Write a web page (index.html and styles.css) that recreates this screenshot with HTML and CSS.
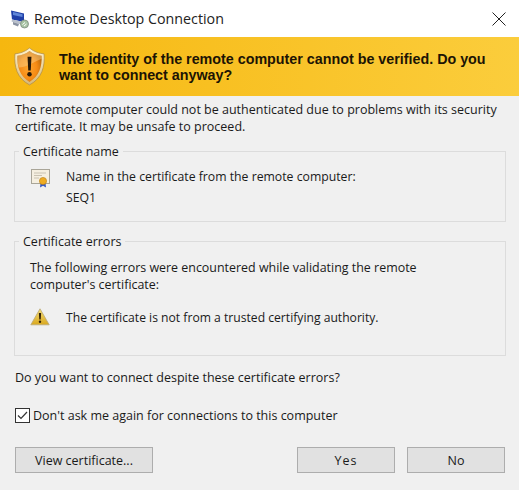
FILE: index.html
```html
<!DOCTYPE html>
<html lang="en">
<head>
<meta charset="utf-8">
<title>Remote Desktop Connection</title>
<link rel="stylesheet" href="styles.css">
</head>
<body>
<div class="dialog">
  <header class="titlebar">
    <svg class="app-icon" viewBox="0 0 20 20">
      <path d="M1 1.5 14 4.5 14 13 2 10.500Z" fill="#1f3fa8"/>
      <path d="M3 3 12.500 5.200 12.500 8 3 6Z" fill="#5f86d8"/>
      <path d="M2 10.500 14 13 15 15 9 15 1.500 12.500Z" fill="#b9c0cc"/>
      <path d="M3 13 9 15 8 17.500 3 15.500Z" fill="#8a93a3"/>
      <circle cx="14.500" cy="15" r="4" fill="#a8c4a4" stroke="#7d8a80" stroke-width=".8"/>
      <path d="M12.500 15.500 15 13.500M14 17 16.500 15" stroke="#fff" stroke-width="1" fill="none"/>
    </svg>
    <span class="title">Remote Desktop Connection</span>
    <svg class="close" viewBox="0 0 14 14"><path d="M.5.5 13.500 13.500M13.500.5.5 13.500" stroke="#222" stroke-width="1" fill="none"/></svg>
  </header>
  <section class="banner">
    <svg class="shield" viewBox="0 0 34 40">
      <defs>
        <radialGradient id="sg" cx=".45" cy=".55" r=".6">
          <stop offset="0" stop-color="#ffa52e"/><stop offset=".6" stop-color="#f58a14"/><stop offset="1" stop-color="#b8680c"/>
        </radialGradient>
        <linearGradient id="se" x1="0" y1="0" x2="0" y2="1">
          <stop offset="0" stop-color="#fff4d0"/><stop offset="1" stop-color="#d8b873"/>
        </linearGradient>
      </defs>
      <path d="M17 1C12 5 7 6.500 2 7 1 20 4 32 17 39 30 32 33 20 32 7 27 6.500 22 5 17 1Z" fill="url(#se)" stroke="#a8874a" stroke-width=".7"/>
      <path d="M17 4C13 7 9 8.500 4.500 9 4 20 7 30 17 36 27 30 30 20 29.500 9 25 8.500 21 7 17 4Z" fill="url(#sg)"/>
      <path d="M17 4C13 7 9 8.500 4.500 9 4.300 13 4.700 17 6 21 14 21 22 15 29.500 12V9C25 8.500 21 7 17 4Z" fill="#ffe0a0" opacity=".4"/>
      <path d="M15 10H19L18.300 24H15.700Z" fill="#2a1a08"/>
      <circle cx="17" cy="28" r="2.300" fill="#2a1a08"/>
    </svg>
    <p class="banner-text">The identity of the remote computer cannot be verified. Do you want to connect anyway?</p>
  </section>
  <main class="content">
    <p class="intro">The remote computer could not be authenticated due to problems with its security certificate. It may be unsafe to proceed.</p>
    <fieldset class="group group-name">
      <legend>Certificate name</legend>
      <div class="row">
        <svg class="cert" viewBox="0 0 20 19">
          <rect x=".5" y=".5" width="18" height="14" fill="#f5efe0" stroke="#a9a598"/>
          <path d="M3 4H15M3 6.500H11M3 9H8" stroke="#c9c2b2" fill="none"/>
          <path d="M9.500 14 9 18.500 12 16.800 15 18.500 14.500 14Z" fill="#3458c4"/>
          <circle cx="12" cy="12" r="3.600" fill="#eeac24" stroke="#b97d14" stroke-width=".6"/>
        </svg>
        <div class="row-text">
          <div>Name in the certificate from the remote computer:</div>
          <div class="seq">SEQ1</div>
        </div>
      </div>
    </fieldset>
    <fieldset class="group group-errors">
      <legend>Certificate errors</legend>
      <p class="errors-intro">The following errors were encountered while validating the remote computer's certificate:</p>
      <div class="row error-row">
        <svg class="warn" viewBox="0 0 20 18">
          <defs><linearGradient id="wg" x1="0" y1="0" x2="0" y2="1"><stop offset="0" stop-color="#f6df7a"/><stop offset="1" stop-color="#d9a81e"/></linearGradient></defs>
          <path d="M10 .8 19.200 16.800H.8Z" fill="url(#wg)" stroke="#b9a878" stroke-width=".8"/>
          <path d="M8.900 5H11.100L10.700 11.500H9.300Z" fill="#332208"/>
          <circle cx="10" cy="13.700" r="1.200" fill="#332208"/>
        </svg>
        <span>The certificate is not from a trusted certifying authority.</span>
      </div>
    </fieldset>
    <p class="question">Do you want to connect despite these certificate errors?</p>
    <label class="check">
      <svg class="box" viewBox="0 0 15 15">
        <rect x=".5" y=".5" width="14" height="14" fill="#fff" stroke="#333"/>
        <path d="M3 7.500 6 10.500 12 4" stroke="#333" stroke-width="1.200" fill="none"/>
      </svg>
      <span>Don't ask me again for connections to this computer</span>
    </label>
    <footer class="buttons">
      <button class="btn btn-view" type="button">View certificate...</button>
      <button class="btn btn-yes" type="button">Yes</button>
      <button class="btn btn-no" type="button">No</button>
    </footer>
  </main>
</div>
</body>
</html>
```
FILE: styles.css
```css
* { box-sizing: border-box; }
html, body { margin: 0; padding: 0; }
body {
  width: 519px;
  height: 490px;
  overflow: hidden;
  background: #f0f0f0;
  color: #1a1a1a;
  font-family: "Open Sans", "Liberation Sans", sans-serif;
  font-size: 12.500px;
}
p { margin: 0; }
.dialog { display: flex; flex-direction: column; height: 490px; }

.titlebar {
  height: 37px;
  background: #fff;
  display: flex;
  align-items: center;
  padding: 0 13px 0 10px;
}
.app-icon { width: 20px; height: 20px; flex: none; }
.title { margin-left: 4px; font-size: 14.250px; color: #222; flex: 1; }
.close { width: 14px; height: 14px; flex: none; }

.banner {
  height: 59px;
  background: linear-gradient(90deg, #f6b70f 0%, #fbcd3c 100%);
  display: flex;
  align-items: center;
  padding-left: 13px;
}
.shield { width: 33px; height: 39px; flex: none; }
.banner-text {
  margin-left: 13px;
  width: 440px;
  font-family: "Liberation Sans", sans-serif;
  font-weight: 700;
  font-size: 14.300px;
  line-height: 16px;
  color: #1c1404;
}

.content { flex: 1; padding: 5px 13px 0 14px; }
.intro { line-height: 17px; margin-left: 1px; }

.group {
  margin: 0;
  padding: 0;
  border: 1px solid #dcdcdc;
  min-width: 0;
}
.group legend { margin-left: 4px; padding: 0 4px; line-height: 17px; }
.group-name { height: 79px; margin-top: 8px; }
.group-errors { height: 123px; margin-top: 11px; }

.row { display: flex; }
.group-name .row { margin: 9px 0 0 16px; }
.cert { width: 20px; height: 19px; flex: none; }
.row-text { margin-left: 15px; line-height: 17px; font-size: 12.250px; }
.row-text > div:first-child { margin-top: -1px; }
.seq { margin-top: 4px; }

.errors-intro { margin: 9px 60px 0 15px; line-height: 17px; font-size: 12.450px; }
.error-row { align-items: center; margin: 15px 0 0 15px; }
.warn { width: 20px; height: 18px; flex: none; }
.error-row span { margin-left: 16px; font-size: 12.150px; }

.question { margin: 13px 0 0 1px; line-height: 17px; }
.check { display: flex; align-items: center; margin: 21px 0 0 1px; height: 17px; }
.box { width: 15px; height: 15px; flex: none; }
.check span { margin-left: 3px; }

.buttons { display: flex; margin: 23px 1px 0 1px; }
.btn {
  height: 26px;
  background: #e1e1e1;
  border: 1px solid #adadad;
  border-radius: 0;
  padding: 0;
  color: #1a1a1a;
  font-family: inherit;
  font-size: 12.500px;
}
.btn-view { width: 138px; margin-right: auto; }
.btn-yes { width: 98px; letter-spacing: 1px; }
.btn-no { width: 98px; margin-left: 12px; }
```
